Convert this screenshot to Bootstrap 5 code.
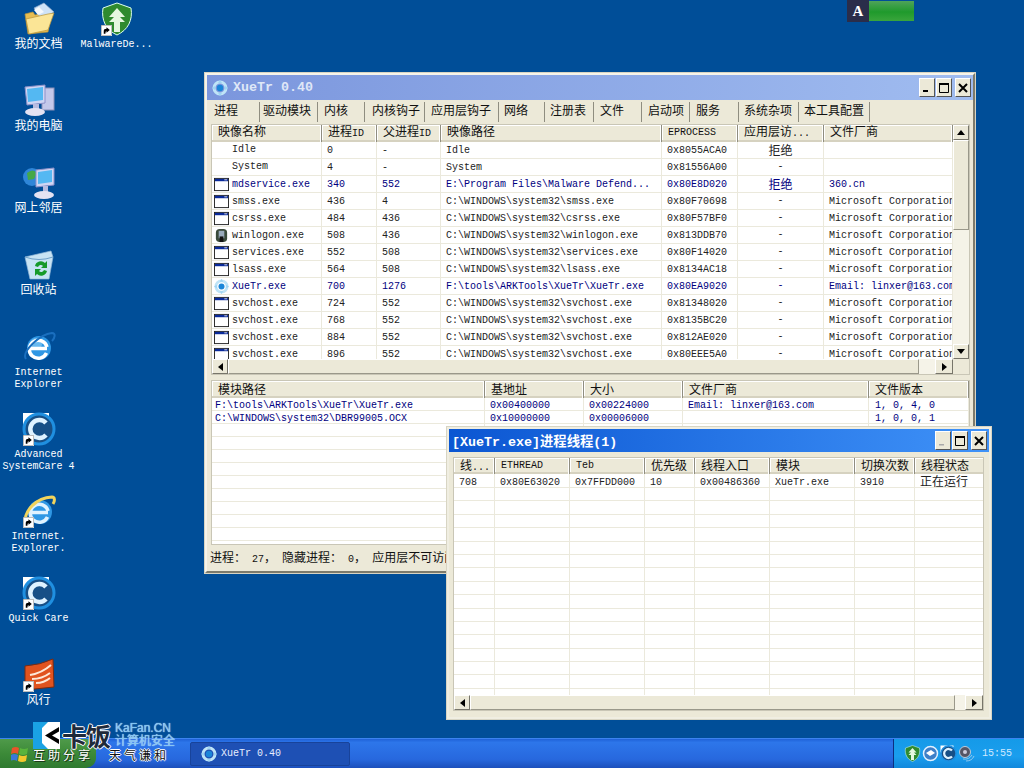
<!DOCTYPE html>
<html lang="zh"><head><meta charset="utf-8"><title>XueTr</title>
<link href="https://cdn.jsdelivr.net/npm/bootstrap@5.3.0/dist/css/bootstrap.min.css" rel="stylesheet">
<style>
html,body{height:768px;overflow:hidden}
body{background:#004e98;font:10px/1 "Liberation Mono","Noto Sans CJK SC",monospace;color:#111}
.cjk{font-family:"Noto Sans CJK SC",sans-serif;font-size:12px}
.mono{font:10px/12px "Liberation Mono",monospace;white-space:pre}
.screen{width:1024px;height:768px}
.desk{height:738px}
.col-icons{width:77px;padding-top:2px}
.dicon{height:82px;color:#fff;text-align:center;line-height:12px;width:77px}
.icobox{width:34px;height:34px;margin:0 auto}
.icobox svg{display:block;height:34px;width:34px}
.icobox svg.arrow{position:absolute;left:1px;bottom:0;width:11px;height:11px}
.dicon .cap{margin-top:3px}
.dicon .cjk{line-height:14px;margin-top:0}
.malware{left:78px;top:2px}
.tool{left:847px;top:0;width:67px;height:22px}
.tool-a{width:22px;background:#2a2d4a;color:#fff;font:bold 15px "Liberation Serif",serif}
.tool-b{background:linear-gradient(#4fa35a,#1f9a2c 55%,#3aa53c);margin:1px 0}
.xwin{background:#ece9d8;border:2px solid;border-color:#f6f4ea #7d7b6c #7d7b6c #f6f4ea;box-shadow:0 0 0 1px #d8d5c4}
.main-win{left:205px;top:73px;width:770px;height:500px}
.sub-win{left:447px;top:427px;width:544px;height:292px;border-color:#f0eee2}
.tbar{height:25px;padding-left:5px;color:#fff}
.inactive{background:linear-gradient(90deg,#7b96dd,#a0bcf0);color:#dfe7f7}
.active{height:23px;background:linear-gradient(90deg,#0b56d2,#3f92f8);padding-left:3px}
.ttl{font:bold 13.33px "Liberation Mono","Noto Sans CJK SC",monospace;margin-left:5px}
.active .ttl{margin-left:0}
.wbtn{width:16px;height:19px;background:#ece9d8;border:1px solid;border-color:#fff #555 #555 #fff;margin-left:1px;color:#000}
.wbtn.gap{margin-left:3px}
.wbtn svg{width:10px;height:10px}
.bars{margin-right:2px}
.tabsline{height:24px;padding-left:4px}
.tabitem{height:20px;padding:2px 0 0 4px;border-right:1px solid #8f8d80;color:#111;text-decoration:none;flex:none}
.tabitem:nth-child(1){width:49px;padding-left:3px;margin-top:-1px}
.tabitem:nth-child(2){width:58px;padding-left:3px}.tabitem:nth-child(3){width:47px;padding-left:6px}
.tabitem:nth-child(4){width:60px;padding-left:7px}.tabitem:nth-child(5){width:74px;padding-left:6px}
.tabitem:nth-child(6){width:46px;padding-left:5px}.tabitem:nth-child(7){width:49px;padding-left:5px}
.tabitem:nth-child(8){width:48px;padding-left:6px}.tabitem:nth-child(9){width:48px;padding-left:6px}
.tabitem:nth-child(10){width:49px;padding-left:6px}.tabitem:nth-child(11){width:60px;padding-left:5px}
.tabitem:nth-child(12){width:71px;padding-left:5px}
.frame{border:1px solid;border-color:#77756a #f8f6ee #f8f6ee #77756a;background:#fff;margin-left:4px;width:759px;outline:1px solid #c9c6b6;outline-offset:-1px}
.f1{height:251px}
.f2{height:165px;margin-top:5px;overflow:hidden}
.f3{height:254px;width:531px;margin:5px 0 0 4px}
.gridbox{overflow:hidden}
.f1 .gridbox{height:234px}
.glist{table-layout:fixed;border-collapse:separate;border-spacing:0}
.glist th{font-weight:400;background:#ece9d8;height:16px;padding:0 0 0 6px;line-height:12px;border-right:1px solid #8f8d80;box-shadow:inset -1px 0 0 #fff,inset 0 -2px 0 #d6d2c0,inset 1px 1px 0 #fff;white-space:nowrap;vertical-align:top}
.f1 .glist th{height:17px}
.f2 .glist th{height:17px;padding-top:2px}
.f3 .glist th{padding-top:1px}
.f1 .glist th.mono,.f3 .glist th.mono{padding-top:2px}
.glist td{height:17px;padding:2px 0 0 5px;border-right:1px solid #ebe9dc;border-bottom:1px solid #ebe9dc;white-space:nowrap;overflow:hidden;vertical-align:middle;color:#222}
.glist td.ctr{text-align:center;padding:0}
.glist.tight td{height:13px;padding:3px 0 0 5px;line-height:9px}
.glist.tight td:first-child{padding-left:3px}
.glist.tight td:last-child{padding-left:6px}
.f3 .glist td{height:13.4px}
.f3 .glist td:first-child{padding-left:5px}
.f3 .glist td.cjk{padding:1px 0 0 5px;line-height:12px}
.glist tr.blue td{color:#000080}
.glist td.nm{padding-left:2px;padding-top:0}
.nm svg{width:15px;height:15px;vertical-align:middle;margin-right:3px}
.nm .noico{display:inline-block;width:15px;margin-right:3px}
.w1{width:741px}.w2{width:757px}.w3{width:531px}
.vbar{width:16px;background:#f5f3e8}
.sbtn{width:16px;height:15px;flex:none;background:#ece9d8;border:1px solid;border-color:#fff #77756a #77756a #fff}
.thumb{background:#ece9d8;border:1px solid;border-color:#fff #9a988a #9a988a #fff}
.vthumb{height:90px}
.hbar{height:15px;background:#f5f3e8}
.hbar .sbtn{height:15px}
.hbar .sbtn.wide{width:18px}
.hbar .corner{width:16px;background:#ece9d8}
.stbar{height:20px;padding:2px 0 0 3px;white-space:nowrap;overflow:hidden;margin-top:4px;line-height:12px}
.taskbar{height:30px;background:linear-gradient(#1f62d8,#2d76ea 12%,#2768de 70%,#1c4fbb);border-top:1px solid #3c83f0;color:#fff}
.startbtn{width:96px;background:linear-gradient(#4f9a4a,#3c8a38 50%,#2f7a30);border-radius:0 10px 10px 0;padding-left:11px}
.quick{width:94px}
.taskbtn{width:160px;height:24px;background:#1e50b4;border:1px solid #18439a;border-radius:2px;padding-left:10px;color:#e6eeff}
.taskbtn svg{width:16px;height:16px;margin-right:4px}
.tray{width:131px;background:linear-gradient(#159ae8,#1a9eee 60%,#1188dc);border-left:1px solid #0c2f80;padding-left:10px;color:#cfe9ff}
.tray svg{width:17px;height:17px;margin-right:1px}
.tray .clock{margin-left:6px;font-size:10px}
.logobox{left:33px;top:722px;width:142px;height:42px;z-index:5}
.kbox{width:27px;height:27px;flex:none}
.fan{font:bold 25px/27px "Noto Sans CJK SC",sans-serif;color:#1f2a3a;text-shadow:1px 0 #fff,-1px 0 #fff,0 1px #fff,0 -1px #fff;margin-left:2px;width:52px;white-space:nowrap;letter-spacing:-1px}
.kf{color:#7fc4f4;font:12px/13px "Liberation Sans","Noto Sans CJK SC",sans-serif;margin-left:5px;white-space:nowrap;text-shadow:0 0 1px #fff}
.slogan{font:12px/14px "Noto Sans CJK SC",sans-serif;color:#111;text-shadow:1px 0 #fff,-1px 0 #fff,0 1px #fff,0 -1px #fff;letter-spacing:3px;white-space:nowrap}
.slogan.lite{color:#fff;text-shadow:1px 1px #1c3a18,-1px 0 #2a4a26}
.share{margin-top:-1px;height:14px}
.quick-sl{margin-left:16px;letter-spacing:3px}
.k110{width:110px}.k55{width:55px}.k64{width:64px}.k221{width:221px}.k76{width:76px}.k86{width:86px}.k129{width:129px}
.m1{width:273px}.m2{width:99px}.m3{width:99px}.m4{width:186px}.m5{width:100px}
.t1{width:41px}.t2{width:75px}.t3{width:75px}.t4{width:50px}.t5{width:75px}.t6{width:85px}.t7{width:60px}.t8{width:70px}
.spacer16{width:16px}.spacer10{width:10px}
</style></head>
<body>
<svg width="0" height="0" class="d-none">
<symbol id="lnk" viewBox="0 0 10 10"><rect width="10" height="10" fill="#fff"/><rect x=".5" y=".5" width="9" height="9" fill="#fff" stroke="#888" stroke-width=".5"/><path d="M2.500 8V5.500Q2.500 3.500 5 3.500V2L8 4.500 5 7V5.400Q4 5.400 4 8z" fill="#000"/></symbol>
<symbol id="winico" viewBox="0 0 16 16"><rect x=".5" y="1.500" width="15" height="13" fill="#fff" stroke="#222"/><rect x="1" y="2" width="14" height="2.500" fill="#0a2a9a"/><rect x="11" y="2.500" width="3" height="1" fill="#ddd"/></symbol>
<symbol id="ring" viewBox="0 0 16 16"><circle cx="8" cy="8" r="6" fill="none" stroke="#bfe4f7" stroke-width="3"/><circle cx="8" cy="8" r="3.200" fill="#1b86d8"/><path d="M8 0l2 3H6zM8 16l2-3H6zM0 8l3-2v4zM16 8l-3-2v4z" fill="#9fd4f2"/></symbol>
<symbol id="ie" viewBox="0 0 34 34"><circle cx="17" cy="18" r="12" fill="#2f97e4"/><circle cx="14" cy="14" r="6" fill="#8fd0f7" opacity=".6"/><path d="M9 18.500h16M24.500 23a9 9 0 1 1 .5-6" fill="none" stroke="#fff" stroke-width="3.500"/><path d="M4 29C-1 22 18 4 30 3c4 0 3 5 0 8" fill="none" stroke="#1a6fbf" stroke-width="2"/></symbol>
<symbol id="ie2" viewBox="0 0 34 34"><circle cx="18" cy="18" r="12" fill="#2f97e4"/><path d="M10 18.500h16M25.500 23a9 9 0 1 1 .5-6" fill="none" stroke="#dff2ff" stroke-width="3.500"/><path d="M3 28C3 16 14 4 30 3c3 0 3 4 1 7" fill="none" stroke="#f2d45c" stroke-width="3"/></symbol>
<symbol id="asc" viewBox="0 0 34 34"><rect x="1" y="1" width="14" height="14" fill="#fff"/><rect x="19" y="1" width="8" height="4" fill="#fff"/><circle cx="17" cy="17" r="15" fill="#174f86"/><circle cx="17" cy="17" r="15" fill="none" stroke="#1f8fe0" stroke-width="3"/><path d="M24 11a9 9 0 1 0 0 12" fill="none" stroke="#dff2ff" stroke-width="4.500"/></symbol>
<symbol id="shield" viewBox="0 0 34 34"><path d="M17 1l14 5c2 12-3 22-14 27C6 28 1 18 3 6z" fill="#2f8a2f" stroke="#dfe" stroke-width="1"/><path d="M17 6l8 9h-5l5 5h-5v10h-6V20H9l5-5H9z" fill="#e6f7e0"/></symbol>
</svg>
<div class="screen d-flex flex-column position-relative">
  <main class="desk position-relative d-flex">
    <div class="col-icons">
      <div class="dicon"><div class="icobox position-relative"><svg viewBox="0 0 34 34"><path d="M3 12l8-2 2 3 14-3 2 3-3 17-20 2z" fill="#e8be52" stroke="#b9933a" stroke-width=".7"/><path d="M12 6L22 1l10 9-12 8z" fill="#cfe3f7" stroke="#8aa8cc" stroke-width=".7"/><path d="M17 5l5 5-6 3-4-5z" fill="#f5f8fc"/><path d="M4 17l22-5 6-1-6 17-19 4z" fill="#fbe596" stroke="#b9933a" stroke-width=".7"/></svg></div><div class="cap cjk">我的文档</div></div>
      <div class="dicon"><div class="icobox position-relative"><svg viewBox="0 0 34 34"><rect x="20" y="4" width="12" height="22" fill="#c4c8ea" stroke="#8c90b8"/><path d="M3 3l20-2v18L5 21z" fill="#cfd6f4" stroke="#8c90c8"/><path d="M5 5l16-2v13L6 18z" fill="#54b8f2"/><rect x="11" y="20" width="6" height="5" fill="#b8bce0"/><ellipse cx="13" cy="28" rx="10" ry="4" fill="#e4e2f2"/></svg></div><div class="cap cjk">我的电脑</div></div>
      <div class="dicon"><div class="icobox position-relative"><svg viewBox="0 0 34 34"><circle cx="10" cy="11" r="9" fill="#2f86d8"/><path d="M5 7q6-5 10 0l-3 6-6 1z" fill="#45a848"/><path d="M14 4l18-2v17l-18 2z" fill="#cfd6f4" stroke="#8c90c8"/><path d="M16 6l14-2v12l-14 2z" fill="#54b8f2"/><rect x="21" y="20" width="5" height="6" fill="#b8bce0"/><ellipse cx="22" cy="29" rx="10" ry="4" fill="#e4e2f2"/></svg></div><div class="cap cjk">网上邻居</div></div>
      <div class="dicon"><div class="icobox position-relative"><svg viewBox="0 0 34 34"><path d="M3 9l26-6 2 6-4 22H8z" fill="#c7e3f4" stroke="#92b8d8" stroke-width=".7"/><path d="M3 9q14 5 28 0" fill="none" stroke="#6ea0c8"/><path d="M13 18a6 6 0 0 1 10-3l2-2v7h-6l2-2a3 3 0 0 0-5 1zM25 23a6 6 0 0 1-10 3l-2 2v-7h6l-2 2a3 3 0 0 0 5-1z" fill="#169a2a"/></svg></div><div class="cap cjk">回收站</div></div>
      <div class="dicon"><div class="icobox position-relative"><svg><use href="#ie"/></svg></div><div class="cap">Internet<br>Explorer</div></div>
      <div class="dicon"><div class="icobox position-relative"><svg><use href="#asc"/></svg><svg class="arrow"><use href="#lnk"/></svg></div><div class="cap">Advanced<br>SystemCare 4</div></div>
      <div class="dicon"><div class="icobox position-relative"><svg><use href="#ie2"/></svg><svg class="arrow"><use href="#lnk"/></svg></div><div class="cap">Internet.<br>Explorer.</div></div>
      <div class="dicon"><div class="icobox position-relative"><svg><use href="#asc"/></svg><svg class="arrow"><use href="#lnk"/></svg></div><div class="cap">Quick Care</div></div>
      <div class="dicon"><div class="icobox position-relative"><svg viewBox="0 0 34 34"><path d="M3 8Q18 7 31 1l1 28-29 3z" fill="#e0531f" stroke="#7a2a10"/><path d="M8 17Q20 15 29 7M10 21q10 0 18-6M14 25q8 0 14-5" fill="none" stroke="#fde8d8" stroke-width="2"/></svg><svg class="arrow"><use href="#lnk"/></svg></div><div class="cap cjk">风行</div></div>
    </div>
    <div class="dicon position-absolute malware"><div class="icobox position-relative"><svg><use href="#shield"/></svg><svg class="arrow"><use href="#lnk"/></svg></div><div class="cap">MalwareDe...</div></div>

    <div class="tool position-absolute d-flex"><div class="tool-a d-flex align-items-center justify-content-center">A</div><div class="tool-b flex-grow-1"></div></div>

    <section class="xwin main-win position-absolute d-flex flex-column">
      <div class="tbar inactive d-flex align-items-center"><svg width="16" height="16"><use href="#ring"/></svg><span class="ttl">XueTr 0.40</span>
        <div class="ms-auto d-flex bars"><div class="wbtn d-flex align-items-center justify-content-center"><svg viewBox="0 0 10 10"><rect x="1" y="7" width="5" height="2"/></svg></div><div class="wbtn d-flex align-items-center justify-content-center"><svg viewBox="0 0 10 10"><path d="M.5 1.500h9v8h-9z" fill="none" stroke="#000"/><rect width="10" height="2"/></svg></div><div class="wbtn gap d-flex align-items-center justify-content-center"><svg viewBox="0 0 10 10"><path d="M1 1l8 8M9 1l-8 8" stroke="#000" stroke-width="2"/></svg></div></div></div>
      <nav class="tabsline d-flex align-items-center cjk">
        <a class="tabitem">进程</a><a class="tabitem">驱动模块</a><a class="tabitem">内核</a><a class="tabitem">内核钩子</a><a class="tabitem">应用层钩子</a><a class="tabitem">网络</a><a class="tabitem">注册表</a><a class="tabitem">文件</a><a class="tabitem">启动项</a><a class="tabitem">服务</a><a class="tabitem">系统杂项</a><a class="tabitem">本工具配置</a>
      </nav>
      <div class="frame f1 d-flex flex-column">
        <div class="d-flex flex-grow-1">
          <div class="gridbox w1">
            <table class="glist w1">
              <colgroup><col class="k110"><col class="k55"><col class="k64"><col class="k221"><col class="k76"><col class="k86"><col class="k129"></colgroup>
              <thead class="cjk"><tr><th>映像名称</th><th>进程<span class="mono">ID</span></th><th>父进程<span class="mono">ID</span></th><th>映像路径</th><th class="mono">EPROCESS</th><th>应用层访<span class="mono">...</span></th><th>文件厂商</th></tr></thead>
              <tbody>
              <tr><td class="nm"><span class="noico"></span>Idle</td><td>0</td><td>-</td><td>Idle</td><td>0x8055ACA0</td><td class="ctr cjk">拒绝</td><td></td></tr>
              <tr><td class="nm"><span class="noico"></span>System</td><td>4</td><td>-</td><td>System</td><td>0x81556A00</td><td class="ctr">-</td><td></td></tr>
              <tr class="blue"><td class="nm"><svg><use href="#winico"/></svg>mdservice.exe</td><td>340</td><td>552</td><td>E:\Program Files\Malware Defend...</td><td>0x80E8D020</td><td class="ctr cjk">拒绝</td><td>360.cn</td></tr>
              <tr><td class="nm"><svg><use href="#winico"/></svg>smss.exe</td><td>436</td><td>4</td><td>C:\WINDOWS\system32\smss.exe</td><td>0x80F70698</td><td class="ctr">-</td><td>Microsoft Corporation</td></tr>
              <tr><td class="nm"><svg><use href="#winico"/></svg>csrss.exe</td><td>484</td><td>436</td><td>C:\WINDOWS\system32\csrss.exe</td><td>0x80F57BF0</td><td class="ctr">-</td><td>Microsoft Corporation</td></tr>
              <tr><td class="nm"><svg viewBox="0 0 16 16"><rect x="2" y="1" width="12" height="14" rx="4" fill="#3a4a3a"/><rect x="5" y="3" width="6" height="8" fill="#9ab"/><rect x="6" y="9" width="4" height="6" fill="#111"/></svg>winlogon.exe</td><td>508</td><td>436</td><td>C:\WINDOWS\system32\winlogon.exe</td><td>0x813DDB70</td><td class="ctr">-</td><td>Microsoft Corporation</td></tr>
              <tr><td class="nm"><svg><use href="#winico"/></svg>services.exe</td><td>552</td><td>508</td><td>C:\WINDOWS\system32\services.exe</td><td>0x80F14020</td><td class="ctr">-</td><td>Microsoft Corporation</td></tr>
              <tr><td class="nm"><svg><use href="#winico"/></svg>lsass.exe</td><td>564</td><td>508</td><td>C:\WINDOWS\system32\lsass.exe</td><td>0x8134AC18</td><td class="ctr">-</td><td>Microsoft Corporation</td></tr>
              <tr class="blue"><td class="nm"><svg><use href="#ring"/></svg>XueTr.exe</td><td>700</td><td>1276</td><td>F:\tools\ARKTools\XueTr\XueTr.exe</td><td>0x80EA9020</td><td class="ctr">-</td><td>Email: linxer@163.com</td></tr>
              <tr><td class="nm"><svg><use href="#winico"/></svg>svchost.exe</td><td>724</td><td>552</td><td>C:\WINDOWS\system32\svchost.exe</td><td>0x81348020</td><td class="ctr">-</td><td>Microsoft Corporation</td></tr>
              <tr><td class="nm"><svg><use href="#winico"/></svg>svchost.exe</td><td>768</td><td>552</td><td>C:\WINDOWS\system32\svchost.exe</td><td>0x8135BC20</td><td class="ctr">-</td><td>Microsoft Corporation</td></tr>
              <tr><td class="nm"><svg><use href="#winico"/></svg>svchost.exe</td><td>884</td><td>552</td><td>C:\WINDOWS\system32\svchost.exe</td><td>0x812AE020</td><td class="ctr">-</td><td>Microsoft Corporation</td></tr>
              <tr><td class="nm"><svg><use href="#winico"/></svg>svchost.exe</td><td>896</td><td>552</td><td>C:\WINDOWS\system32\svchost.exe</td><td>0x80EEE5A0</td><td class="ctr">-</td><td>Microsoft Corporation</td></tr>
              </tbody>
            </table>
          </div>
          <div class="vbar d-flex flex-column">
            <div class="sbtn d-flex align-items-center justify-content-center"><svg width="8" height="5"><path d="M4 0l4 5H0z"/></svg></div>
            <div class="thumb vthumb"></div>
            <div class="flex-grow-1"></div>
            <div class="sbtn d-flex align-items-center justify-content-center"><svg width="8" height="5"><path d="M0 0h8L4 5z"/></svg></div>
          </div>
        </div>
        <div class="hbar d-flex">
          <div class="sbtn d-flex align-items-center justify-content-center"><svg width="5" height="8"><path d="M5 0v8L0 4z"/></svg></div>
          <div class="thumb flex-grow-1"></div>
          <div class="spacer16"></div>
          <div class="sbtn wide d-flex align-items-center justify-content-center"><svg width="5" height="8"><path d="M0 0v8l5-4z"/></svg></div>
          <div class="corner"></div>
        </div>
      </div>
      <div class="frame f2">
        <table class="glist tight w2">
          <colgroup><col class="m1"><col class="m2"><col class="m3"><col class="m4"><col class="m5"></colgroup>
          <thead class="cjk"><tr><th>模块路径</th><th>基地址</th><th>大小</th><th>文件厂商</th><th>文件版本</th></tr></thead>
          <tbody>
          <tr class="blue"><td>F:\tools\ARKTools\XueTr\XueTr.exe</td><td>0x00400000</td><td>0x00224000</td><td>Email: linxer@163.com</td><td>1, 0, 4, 0</td></tr>
          <tr class="blue"><td>C:\WINDOWS\system32\DBR99005.OCX</td><td>0x10000000</td><td>0x00006000</td><td></td><td>1, 0, 0, 1</td></tr>
          <tr><td></td><td></td><td></td><td></td><td></td></tr><tr><td></td><td></td><td></td><td></td><td></td></tr><tr><td></td><td></td><td></td><td></td><td></td></tr><tr><td></td><td></td><td></td><td></td><td></td></tr><tr><td></td><td></td><td></td><td></td><td></td></tr><tr><td></td><td></td><td></td><td></td><td></td></tr><tr><td></td><td></td><td></td><td></td><td></td></tr><tr><td></td><td></td><td></td><td></td><td></td></tr><tr><td></td><td></td><td></td><td></td><td></td></tr>
          </tbody>
        </table>
      </div>
      <div class="stbar cjk">进程：<span class="mono"> 27</span>，<span class="mono"> </span>隐藏进程：<span class="mono"> 0</span>，<span class="mono"> </span>应用层不可访问进程：<span class="mono"> 0</span></div>
    </section>

    <section class="xwin sub-win position-absolute d-flex flex-column">
      <div class="tbar active d-flex align-items-center"><span class="ttl">[XueTr.exe]进程线程(1)</span>
        <div class="ms-auto d-flex bars"><div class="wbtn d-flex align-items-center justify-content-center"><svg viewBox="0 0 10 10"><rect x="1" y="8" width="5" height="1.500" fill="#aaa"/></svg></div><div class="wbtn d-flex align-items-center justify-content-center"><svg viewBox="0 0 10 10"><path d="M.5 1.500h9v8h-9z" fill="none" stroke="#000"/><rect width="10" height="2"/></svg></div><div class="wbtn gap d-flex align-items-center justify-content-center"><svg viewBox="0 0 10 10"><path d="M1 1l8 8M9 1l-8 8" stroke="#000" stroke-width="2"/></svg></div></div></div>
      <div class="frame f3 d-flex flex-column">
        <div class="gridbox flex-grow-1">
          <table class="glist tight w3">
            <colgroup><col class="t1"><col class="t2"><col class="t3"><col class="t4"><col class="t5"><col class="t6"><col class="t7"><col class="t8"></colgroup>
            <thead class="cjk"><tr><th>线<span class="mono">...</span></th><th class="mono">ETHREAD</th><th class="mono">Teb</th><th>优先级</th><th>线程入口</th><th>模块</th><th>切换次数</th><th>线程状态</th></tr></thead>
            <tbody>
            <tr><td>708</td><td>0x80E63020</td><td>0x7FFDD000</td><td>10</td><td>0x00486360</td><td>XueTr.exe</td><td>3910</td><td class="cjk">正在运行</td></tr>
            <tr><td></td><td></td><td></td><td></td><td></td><td></td><td></td><td></td></tr><tr><td></td><td></td><td></td><td></td><td></td><td></td><td></td><td></td></tr><tr><td></td><td></td><td></td><td></td><td></td><td></td><td></td><td></td></tr><tr><td></td><td></td><td></td><td></td><td></td><td></td><td></td><td></td></tr><tr><td></td><td></td><td></td><td></td><td></td><td></td><td></td><td></td></tr><tr><td></td><td></td><td></td><td></td><td></td><td></td><td></td><td></td></tr><tr><td></td><td></td><td></td><td></td><td></td><td></td><td></td><td></td></tr><tr><td></td><td></td><td></td><td></td><td></td><td></td><td></td><td></td></tr><tr><td></td><td></td><td></td><td></td><td></td><td></td><td></td><td></td></tr><tr><td></td><td></td><td></td><td></td><td></td><td></td><td></td><td></td></tr><tr><td></td><td></td><td></td><td></td><td></td><td></td><td></td><td></td></tr><tr><td></td><td></td><td></td><td></td><td></td><td></td><td></td><td></td></tr><tr><td></td><td></td><td></td><td></td><td></td><td></td><td></td><td></td></tr><tr><td></td><td></td><td></td><td></td><td></td><td></td><td></td><td></td></tr><tr><td></td><td></td><td></td><td></td><td></td><td></td><td></td><td></td></tr><tr><td></td><td></td><td></td><td></td><td></td><td></td><td></td><td></td></tr>
            </tbody>
          </table>
        </div>
        <div class="hbar d-flex">
          <div class="sbtn d-flex align-items-center justify-content-center"><svg width="5" height="8"><path d="M5 0v8L0 4z"/></svg></div>
          <div class="thumb flex-grow-1"></div>
          <div class="spacer10"></div>
          <div class="sbtn wide d-flex align-items-center justify-content-center"><svg width="5" height="8"><path d="M0 0v8l5-4z"/></svg></div>
        </div>
      </div>
    </section>
  </main>

  <footer class="taskbar d-flex">
    <div class="startbtn d-flex align-items-center"><svg width="18" height="18" viewBox="0 0 18 18"><path d="M1 3q4-2 7 0l-1 6q-3-2-7 0z" fill="#e8542a"/><path d="M9 3q4 2 8 0l-1 6q-4 2-8 0z" fill="#5ab43c"/><path d="M0 10q3-2 7 0l-1 6q-3-2-7 0z" fill="#3a78d8"/><path d="M8 10q4 2 8 0l-1 6q-4 2-8 0z" fill="#f4c82c"/></svg></div>
    <div class="quick"></div>
    <div class="taskbtn d-flex align-items-center align-self-center"><svg><use href="#ring"/></svg>XueTr 0.40</div>
    <div class="tray ms-auto d-flex align-items-center"><svg><use href="#shield"/></svg><svg viewBox="0 0 17 17"><circle cx="8.500" cy="8.500" r="7" fill="#3d7fc8" stroke="#e0f0ff" stroke-width="1.500"/><path d="M4 8l5-3 4 3-5 3z" fill="#fff"/></svg><svg><use href="#asc"/></svg><svg viewBox="0 0 17 17"><circle cx="7" cy="7" r="5.500" fill="#556" stroke="#bcd"/><circle cx="7" cy="7" r="2" fill="#ccd"/><path d="M5 14q6 1 9-4M8 16q6 0 8-5" fill="none" stroke="#8fc8f0"/></svg><span class="clock">15:55</span></div>
  </footer>

  <div class="logobox position-absolute">
    <div class="d-flex">
      <svg class="kbox" viewBox="0 0 27 27"><rect width="27" height="27" fill="#1aa2e4"/><rect x="9" y="0" width="18" height="27" fill="#fff"/><path d="M26 5L12 13.500 26 22v-4.500L19 13.500 26 9.500z" fill="#000"/><path d="M9 0h6L9 6zM9 27h6l-6-6z" fill="#1aa2e4"/></svg>
      <div class="fan">卡饭</div>
      <div class="kf">KaFan.CN<br>计算机安全</div>
    </div>
    <div class="d-flex share"><div class="slogan lite">互助分享</div><div class="slogan quick-sl">天气谦和</div></div>
  </div>
</div>
</body></html>
